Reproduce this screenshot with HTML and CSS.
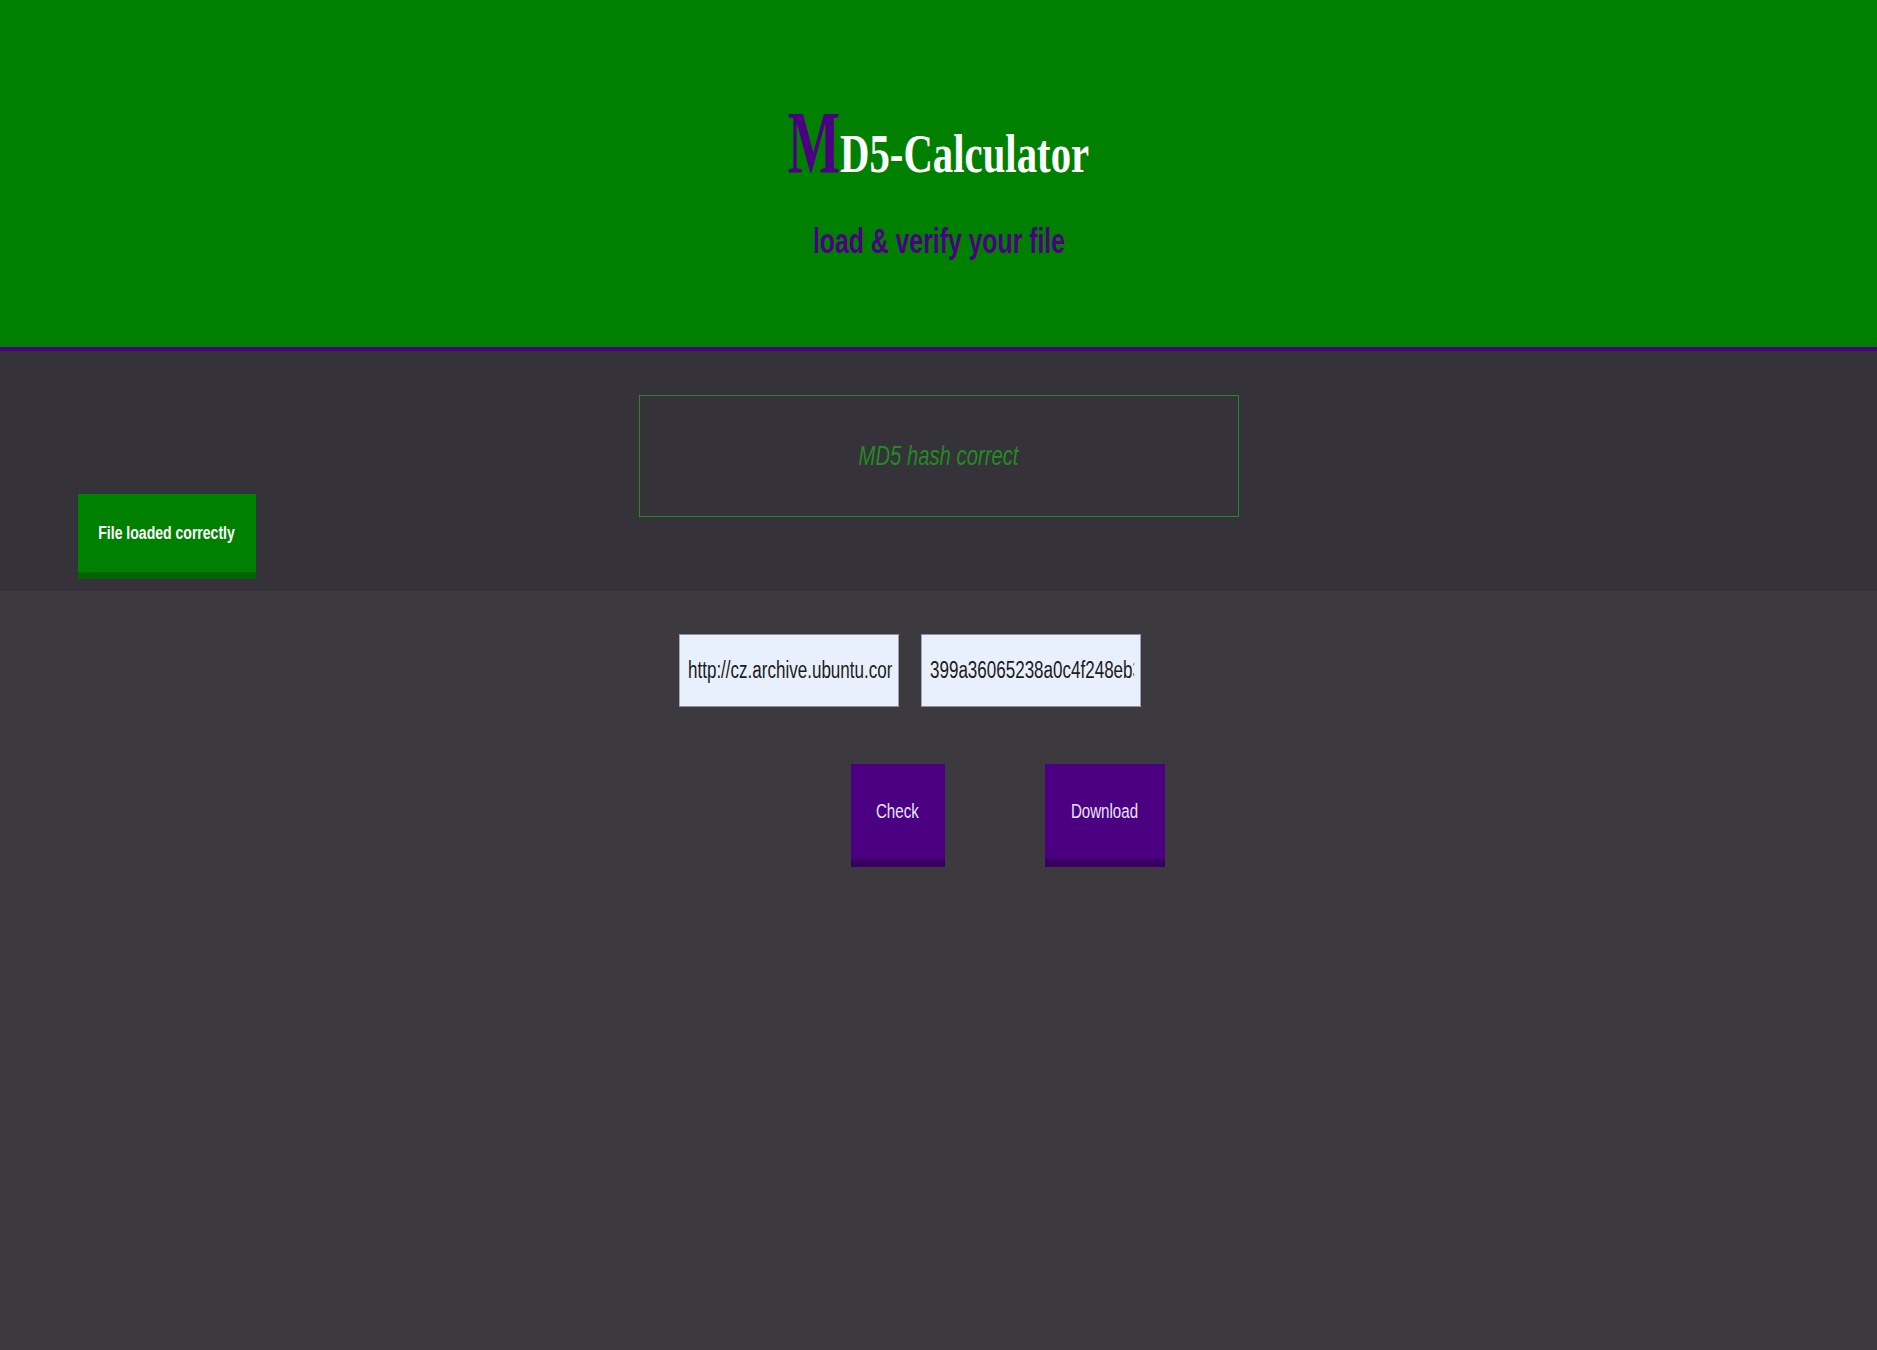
FILE: index.html
```html
<!DOCTYPE html>
<html lang="en">
<head>
<meta charset="utf-8">
<title>MD5-Calculator</title>
<link rel="stylesheet" href="styles.css">
</head>
<body>
<div class="page">
  <header class="hero">
    <h1 class="title"><span class="title-text"><span class="title-m">M</span><span class="title-rest">D5-Calculator</span></span></h1>
    <p class="subtitle"><span class="subtitle-text">load &amp; verify your file</span></p>
  </header>
  <section class="status">
    <div class="result"><span class="result-text">MD5 hash correct</span></div>
    <div class="toast"><span class="toast-text">File loaded correctly</span></div>
  </section>
  <main class="controls">
    <div class="fields">
      <input class="field" type="text" value="http://cz.archive.ubuntu.com/ubuntu/dists/focal/main/installer-amd64/current/legacy-images/netboot/mini.iso">
      <input class="field" type="text" value="399a36065238a0c4f248eb3d1b7e2c4f">
    </div>
    <div class="actions">
      <button class="btn btn-check" type="button"><span class="btn-text">Check</span></button>
      <button class="btn btn-download" type="button"><span class="btn-text">Download</span></button>
    </div>
  </main>
</div>
</body>
</html>
```

FILE: styles.css
```css
html, body {
  margin: 0;
  padding: 0;
  height: 100%;
}

body {
  font-family: "Liberation Sans", Arial, sans-serif;
  background: #3c393f;
}

.page {
  min-height: 100vh;
  display: flex;
  flex-direction: column;
}

/* ---------- header ---------- */
.hero {
  height: 347px;
  background: #008000;
  border-bottom: 4px solid #4b0082;
  text-align: center;
}

.title {
  margin: 0;
  padding-top: 99px;
  font-family: "Liberation Serif", "Times New Roman", serif;
  font-weight: bold;
  font-size: 88px;
  line-height: 88px;
  color: #ffffff;
}

.title-text {
  display: inline-block;
  transform: scaleX(0.755);
  transform-origin: center;
}

.title-m {
  display: inline-block;
  color: #4b0082;
  font-size: 88px;
  transform: scaleX(0.834);
  transform-origin: right center;
  margin-left: -14px;
}

.title-rest {
  font-size: 54px;
  color: #ffffff;
}

.subtitle {
  margin: 22px 0 0;
  font-size: 35px;
  font-weight: bold;
  line-height: 42px;
  color: #4b0082;
}

.subtitle-text {
  display: inline-block;
  transform: scaleX(0.708);
  transform-origin: center;
}

/* ---------- status band ---------- */
.status {
  position: relative;
  height: 240px;
  box-sizing: border-box;
  padding-top: 44px;
  background: #35323a;
}

.result {
  box-sizing: border-box;
  width: 600px;
  height: 122px;
  margin: 0 auto;
  border: 1px solid #228b22;
  display: flex;
  align-items: center;
  justify-content: center;
}

.result-text {
  display: inline-block;
  font-size: 28px;
  font-style: italic;
  color: #228b22;
  transform: scaleX(0.724);
}

.toast {
  position: absolute;
  left: 78px;
  top: 143px;
  box-sizing: border-box;
  width: 178px;
  height: 85px;
  background: #008000;
  border-bottom: 7px solid #006400;
  display: flex;
  align-items: center;
  justify-content: center;
}

.toast-text {
  display: inline-block;
  font-size: 18px;
  font-weight: bold;
  color: #ffffff;
  white-space: nowrap;
  transform: scaleX(0.78);
}

/* ---------- controls ---------- */
.controls {
  flex: 1;
  background: #3c393f;
  padding-top: 43px;
}

.fields {
  display: flex;
  justify-content: center;
  gap: 22px;
  padding-right: 58px;
}

.field {
  box-sizing: border-box;
  width: 297px;
  height: 73px;
  margin: 0 -77px 0 0;
  padding: 0 8px 0 11px;
  border: 1px solid #8f8f99;
  border-radius: 0;
  background: #e8f0fe;
  color: #1b1b1b;
  font-family: "Liberation Sans", Arial, sans-serif;
  font-size: 23px;
  outline: none;
  transform: scaleX(0.74);
  transform-origin: left center;
}

.actions {
  display: flex;
  justify-content: center;
  gap: 100px;
  margin-top: 57px;
  padding-left: 138px;
}

.btn {
  box-sizing: border-box;
  height: 103px;
  padding: 0;
  border: none;
  border-bottom: 8px solid #380062;
  border-radius: 0;
  background: #4b0082;
  color: #e6e6fa;
  font-family: "Liberation Sans", Arial, sans-serif;
  font-size: 20px;
  cursor: pointer;
}

.btn-check {
  width: 94px;
}

.btn-download {
  width: 120px;
}

.btn-text {
  display: inline-block;
  transform: scaleX(0.755);
}
```
